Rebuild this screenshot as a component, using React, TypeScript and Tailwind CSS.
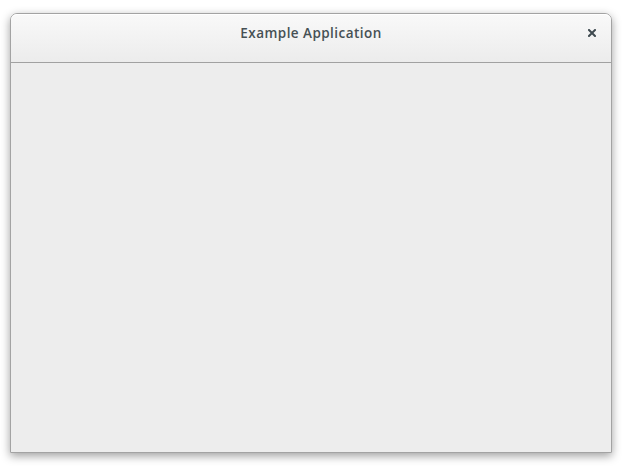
export default function App() {
  return (
    <div className="w-[625px] h-[471px] bg-white overflow-hidden pt-[13px] pl-[10px]">
      <div className="w-[602px] h-[440px] flex flex-col rounded-t-[7px] border border-[#a3a3a3] shadow-[0_3px_10px_rgba(0,0,0,0.38)] overflow-hidden">
        <div className="relative h-[49px] shrink-0 flex items-center justify-center pb-[10px] bg-gradient-to-b from-[#f9f9f9] to-[#ececec] border-b border-[#a1a1a1] rounded-t-[6px] shadow-[inset_0_1px_0_#ffffff]">
          <span className="text-[13.5px] font-semibold text-[#465054] tracking-[0.45px]" style={{ fontFamily: '"Open Sans", "DejaVu Sans", sans-serif' }}>
            Example Application
          </span>
          <svg className="absolute right-[15px] top-[15px]" width="8" height="8" viewBox="0 0 8 8">
            <path d="M1 1 L7 7 M7 1 L1 7" stroke="#3f4a50" strokeWidth="2" strokeLinecap="square" />
          </svg>
        </div>
        <div className="flex-1 bg-[#ededed]" />
      </div>
    </div>
  );
}
